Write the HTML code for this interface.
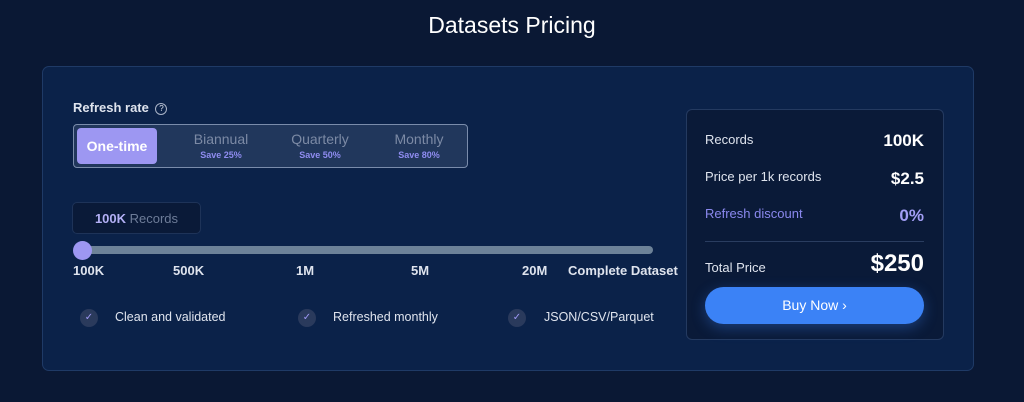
<!DOCTYPE html><html><head><style>
*{margin:0;padding:0;box-sizing:border-box}
body{width:1024px;height:402px;background:#0a1834;font-family:"Liberation Sans",sans-serif;position:relative;overflow:hidden;color:#e6ebf5}
.a{position:absolute;white-space:nowrap}
h1{position:absolute;top:12px;left:0;width:1024px;text-align:center;font-weight:normal;font-size:23px;color:#fff}
.card{position:absolute;left:42px;top:66px;width:932px;height:305px;background:#0b2249;border:1px solid #1f3a66;border-radius:7px}
.seg{position:absolute;left:73px;top:124px;width:395px;height:44px;border:1px solid #7a8cab;border-radius:4px;background:#21375c}
.sel{position:absolute;left:3px;top:3px;width:80px;height:36px;background:#9d97f2;border-radius:4px;color:#fff;font-size:14px;text-align:center;line-height:36px;font-weight:bold}
.opt{position:absolute;top:6px;text-align:center;width:90px;color:#7c8aa5;font-size:14px}
.opt b{display:block;color:#8f8cf0;font-size:9px;margin-top:3px}
.tick{position:absolute;top:309px;width:18px;height:18px;border-radius:50%;background:#2a3a5c;color:#9d97f2;font-size:10px;text-align:center;line-height:18px}
.rc{position:absolute;left:686px;top:109px;width:258px;height:231px;background:#0a1a38;border:1px solid #243a60;border-radius:6px}
.l{position:absolute;left:18px;font-size:13px;color:#dfe4ee}
.r{position:absolute;right:19px;font-weight:bold;color:#fff;font-size:17px}
</style></head><body>
<h1>Datasets Pricing</h1>
<div class="card"></div>
<div class="a" style="left:73px;top:100px;font-size:13px;font-weight:bold;color:#dfe4ee">Refresh rate <span style="display:inline-block;width:12px;height:12px;border:1px solid #aab4c8;border-radius:50%;font-size:8px;text-align:center;line-height:10px;font-weight:normal;vertical-align:1px;margin-left:3px">?</span></div>
<div class="seg"><div class="sel">One-time</div>
<div class="opt" style="left:102px">Biannual<b>Save 25%</b></div>
<div class="opt" style="left:201px">Quarterly<b>Save 50%</b></div>
<div class="opt" style="left:300px">Monthly<b>Save 80%</b></div></div>
<div class="a" style="left:72px;top:202px;width:129px;height:32px;border:1px solid #1e3358;background:#0a1a38;border-radius:5px;text-align:center;line-height:31px;font-size:13px;color:#6d7c98"><b style="color:#b3b0f5">100K</b> Records</div>
<div class="a" style="left:74px;top:246px;width:579px;height:8px;border-radius:4px;background:#6d8298"></div>
<div class="a" style="left:73px;top:241px;width:19px;height:19px;border-radius:50%;background:#9d97f2"></div>
<div class="a" style="top:263px;left:73px;font-size:13px;font-weight:bold;color:#dfe4ee">100K</div>
<div class="a" style="top:263px;left:173px;font-size:13px;font-weight:bold;color:#dfe4ee">500K</div>
<div class="a" style="top:263px;left:296px;font-size:13px;font-weight:bold;color:#dfe4ee">1M</div>
<div class="a" style="top:263px;left:411px;font-size:13px;font-weight:bold;color:#dfe4ee">5M</div>
<div class="a" style="top:263px;left:522px;font-size:13px;font-weight:bold;color:#dfe4ee">20M</div>
<div class="a" style="top:263px;left:568px;font-size:13px;font-weight:bold;color:#dfe4ee">Complete Dataset</div>
<div class="tick" style="left:80px">✓</div><div class="a" style="left:115px;top:310px;font-size:12.5px;color:#dfe4ee">Clean and validated</div>
<div class="tick" style="left:298px">✓</div><div class="a" style="left:333px;top:310px;font-size:12.5px;color:#dfe4ee">Refreshed monthly</div>
<div class="tick" style="left:508px">✓</div><div class="a" style="left:544px;top:310px;font-size:12.5px;color:#dfe4ee">JSON/CSV/Parquet</div>
<div class="rc">
<div class="l" style="top:22px">Records</div><div class="r" style="top:21px">100K</div>
<div class="l" style="top:59px">Price per 1k records</div><div class="r" style="top:59px">$2.5</div>
<div class="l" style="top:96px;color:#8a88ee">Refresh discount</div><div class="r" style="top:96px;color:#a29ef5">0%</div>
<div style="position:absolute;left:18px;right:19px;top:131px;border-top:1px solid #2a3d60"></div>
<div class="l" style="top:150px">Total Price</div><div class="r" style="top:140px;font-size:24px">$250</div>
<div style="position:absolute;left:18px;right:19px;top:177px;height:37px;border-radius:19px;background:#3b82f6;box-shadow:0 4px 14px rgba(59,130,246,.35);text-align:center;line-height:37px;font-size:14px;color:#fff">Buy Now ›</div>
</div>
</body></html>
